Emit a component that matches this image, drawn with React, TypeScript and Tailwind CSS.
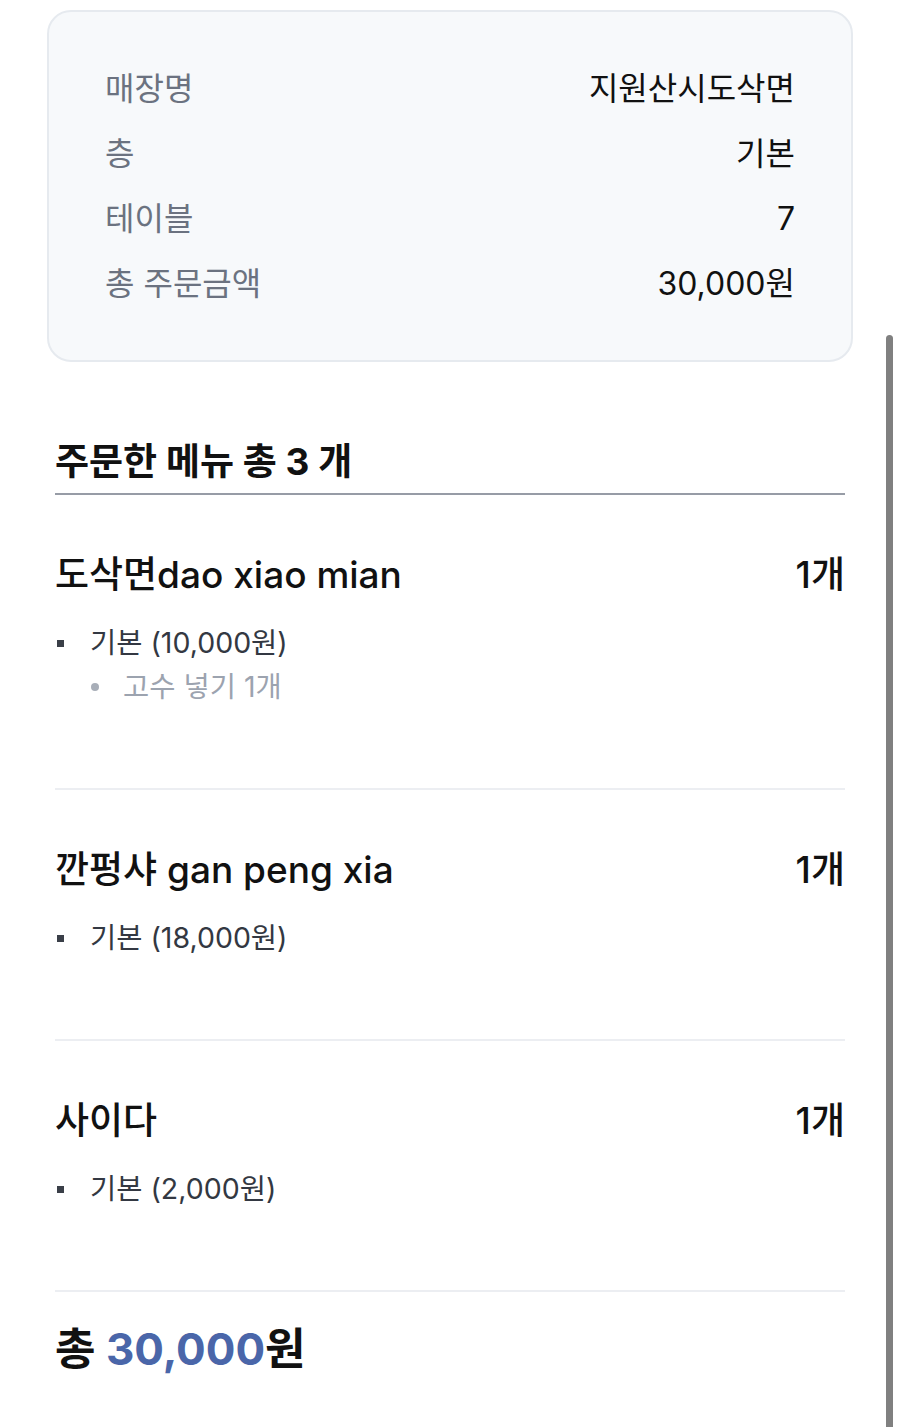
import React from 'react'

type Sub = { label: string; options?: string[] }
type Item = { name: string; qty: number; subs: Sub[] }

const INFO: [string, string][] = [
  ['매장명', '지원산시도삭면'],
  ['층', '기본'],
  ['테이블', '7'],
  ['총 주문금액', '30,000원'],
]

const ITEMS: Item[] = [
  { name: '도삭면dao xiao mian', qty: 1, subs: [{ label: '기본 (10,000원)', options: ['고수 넣기 1개'] }] },
  { name: '깐펑샤 gan peng xia', qty: 1, subs: [{ label: '기본 (18,000원)' }] },
  { name: '사이다', qty: 1, subs: [{ label: '기본 (2,000원)' }] },
]

// Inter for latin/digits, Noto CJK picks up the hangul
const font = { fontFamily: 'Inter, "Noto Sans CJK KR", "Noto Sans", sans-serif' }

export default function App() {
  return (
    <div className="relative min-h-screen bg-white px-[47px] pt-[10px] pb-[40px] text-[#111111]" style={font}>
      <div className="flex flex-col gap-[20px] rounded-[24px] border-2 border-[#e6eaef] bg-[#f7f9fb] px-[56px] py-[54px]">
        {INFO.map(([k, v]) => (
          <div key={k} className="flex items-center justify-between text-[32px] leading-[45px]">
            <span className="text-[#6b7280]">{k}</span>
            <span className="text-[#111111]">{v}</span>
          </div>
        ))}
      </div>

      <div className="px-2">
        <h2 className="mt-[80px] border-b-2 border-[#979ca6] pb-[11px] text-[37px] font-bold leading-[40px]">
          주문한 메뉴 총 {ITEMS.length} 개
        </h2>

        {ITEMS.map((item, i) => (
          <div key={i} className="border-b-2 border-[#eceef2] pt-[58px] pb-[79px]">
            <div className="flex items-center justify-between text-[37px] font-medium leading-[44px]">
              <span>{item.name}</span>
              <span>{item.qty}개</span>
            </div>
            <ul className="mt-[24px]">
              {item.subs.map((s, j) => (
                <li key={j}>
                  <div className="flex items-center text-[28.5px] leading-[44px] text-[#333842]">
                    <span className="ml-[2px] mr-[26px] h-[7px] w-[7px] bg-[#3a3f48]" />
                    {s.label}
                  </div>
                  {s.options?.map((o) => (
                    <div key={o} className="flex items-center pl-[36px] text-[28.5px] leading-[44px] text-[#9ca3af]">
                      <span className="mr-[24px] h-[8px] w-[8px] rounded-full bg-[#a8aeb8]" />
                      {o}
                    </div>
                  ))}
                </li>
              ))}
            </ul>
          </div>
        ))}

        <div className="pt-[32px] text-[44px] font-bold leading-[50px]">
          총 <span className="text-[#4a66a9]">30,000</span>원
        </div>
      </div>

      <div className="fixed right-[7px] top-[335px] bottom-0 w-[7px] rounded-t-full bg-[#808080]" />
    </div>
  )
}
